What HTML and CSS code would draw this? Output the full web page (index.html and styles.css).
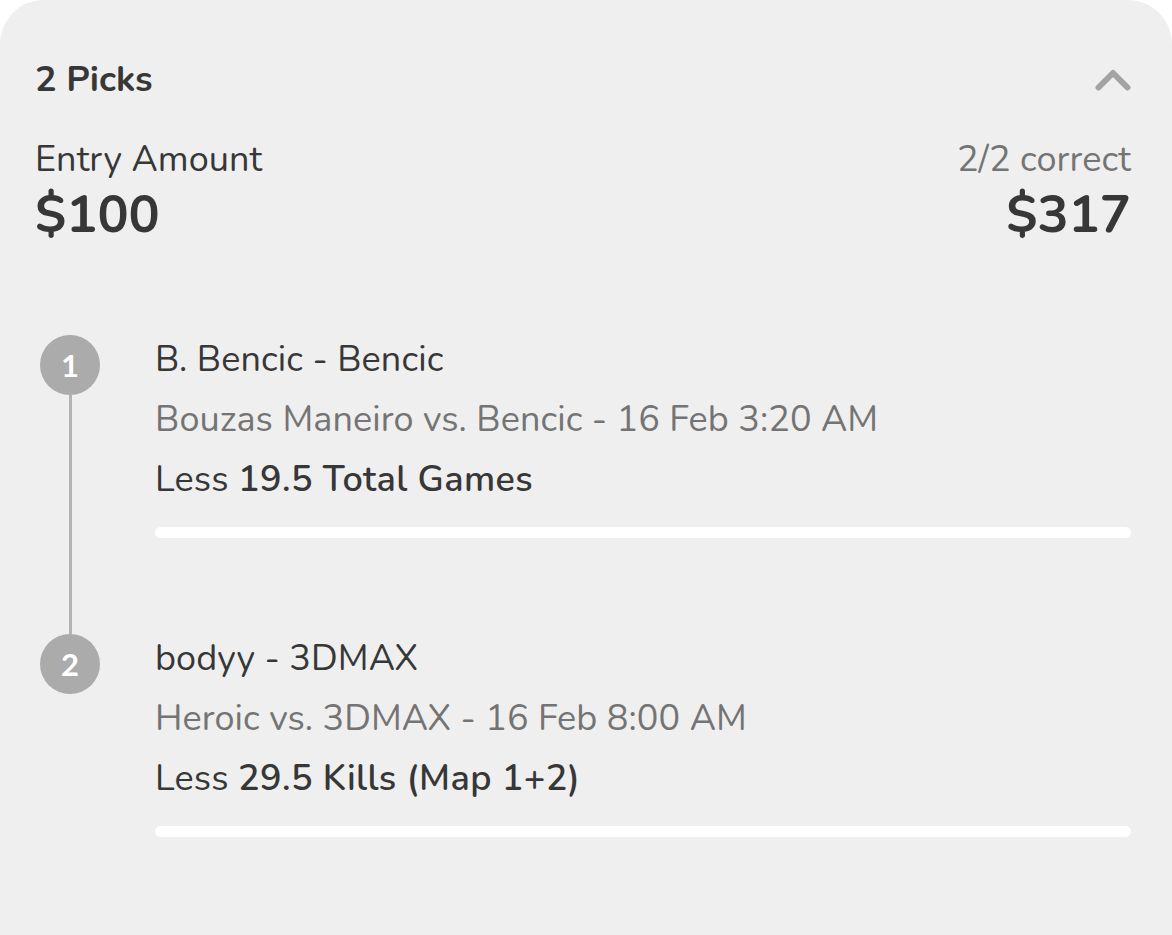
FILE: index.html
```html
<!DOCTYPE html>
<html>
<head>
<meta charset="utf-8">
<link rel="stylesheet" href="styles.css">
</head>
<body>
<div class="card">
  <div class="header">
    <div class="title">2 Picks</div>
    <svg class="chevron" width="36" height="22" viewBox="0 0 36 22"><polyline points="3.5,18.5 18,4 32.5,18.5" fill="none" stroke="#a3a3a3" stroke-width="6" stroke-linecap="round" stroke-linejoin="round"/></svg>
  </div>
  <div class="summary">
    <div class="col">
      <div class="label">Entry Amount</div>
      <div class="amount">$100</div>
    </div>
    <div class="col right">
      <div class="label muted">2/2 correct</div>
      <div class="amount">$317</div>
    </div>
  </div>
  <div class="picks">
    <div class="pick">
      <div class="marker">
        <div class="dot">1</div>
        <div class="line"></div>
      </div>
      <div class="body">
        <div class="row">B. Bencic - Bencic</div>
        <div class="row muted">Bouzas Maneiro vs. Bencic - 16 Feb 3:20 AM</div>
        <div class="row">Less <b>19.5 Total Games</b></div>
        <div class="bar"></div>
      </div>
    </div>
    <div class="pick">
      <div class="marker">
        <div class="dot">2</div>
      </div>
      <div class="body">
        <div class="row">bodyy - 3DMAX</div>
        <div class="row muted">Heroic vs. 3DMAX - 16 Feb 8:00 AM</div>
        <div class="row">Less <b>29.5 Kills (Map 1+2)</b></div>
        <div class="bar"></div>
      </div>
    </div>
  </div>
</div>
</body>
</html>
```

FILE: styles.css
```css
html, body {
  margin: 0;
  padding: 0;
  background: #ffffff;
}
body {
  font-family: "Nunito", "Lato", "Noto Sans", sans-serif;
  color: #373737;
}
.card {
  background: #efefef;
  border-radius: 44px 44px 0 0;
  min-height: 935px;
  box-sizing: border-box;
  padding: 58px 41px 0 35px;
}
.header {
  display: flex;
  justify-content: space-between;
  align-items: center;
}
.title {
  font-size: 36px;
  line-height: 43px;
  font-weight: 700;
}
.chevron {
  display: block;
  margin-top: 1px;
}
.summary {
  display: flex;
  justify-content: space-between;
  margin-top: 37px;
}
.col.right {
  text-align: right;
}
.label {
  font-size: 36px;
  line-height: 43px;
  letter-spacing: 0.1px;
}
.muted {
  color: #747474;
}
.amount {
  margin-top: 3px;
  font-size: 52px;
  line-height: 62px;
  font-weight: 700;
}
.picks {
  margin-top: 84px;
}
.pick {
  display: flex;
}
.pick:first-child {
  padding-bottom: 91px;
}
.marker {
  width: 120px;
  flex: none;
  display: flex;
  flex-direction: column;
  padding-top: 5px;
}
.dot {
  width: 60px;
  height: 60px;
  margin-left: 5px;
  border-radius: 50%;
  background: #ababab;
  color: #ffffff;
  font-family: "Lato", sans-serif;
  font-weight: 700;
  font-size: 31px;
  display: flex;
  align-items: center;
  justify-content: center;
}
.line {
  flex: 1;
  width: 3px;
  margin-left: 33.5px;
  margin-bottom: -96px;
  background: #b3b3b3;
}
.body {
  flex: 1;
}
.row {
  font-size: 36px;
  line-height: 60px;
  letter-spacing: 0.1px;
}
.row b {
  font-weight: 600;
  letter-spacing: 0.4px;
}
.bar {
  margin-top: 17px;
  height: 11px;
  border-radius: 6px;
  background: #ffffff;
}
```
